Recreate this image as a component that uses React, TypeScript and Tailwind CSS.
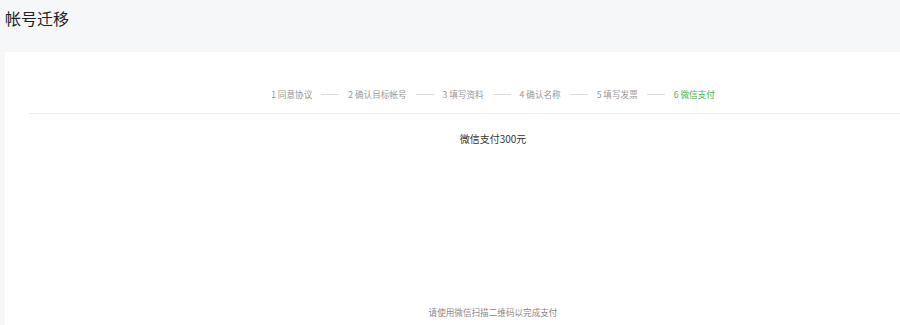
import React from 'react';

const steps = ['1 同意协议', '2 确认目标帐号', '3 填写资料', '4 确认名称', '5 填写发票', '6 微信支付'];

export default function App() {
  return (
    <div
      className="w-[900px] h-[325px] overflow-hidden bg-[#f6f7f9] text-[#333]"
      style={{ fontFamily: '"Noto Sans CJK SC", "Noto Sans", sans-serif' }}
    >
      <div className="h-[52px] pl-[5px] pt-[6px]">
        <h1 className="text-[16px] leading-[24px] font-normal text-[#222]">帐号迁移</h1>
      </div>
      <div className="ml-[5px] w-[976px] h-[300px] bg-white px-[24px] pt-[33px]">
        <div className="flex items-center justify-center h-[18px] text-[8.6px] leading-[18px] text-[#999]">
          {steps.map((s, i) => (
            <React.Fragment key={s}>
              {i > 0 && <span className="mx-[9px] w-[18px] h-px bg-[#ddd]" />}
              <span className={i === steps.length - 1 ? 'text-[#44b549]' : ''}>{s}</span>
            </React.Fragment>
          ))}
        </div>
        <div className="mt-[10px] border-t border-[#eee]" />
        <div className="flex flex-col items-center">
          <p className="mt-[18px] text-[10px] leading-[14px] text-[#353535]">微信支付300元</p>
          <div className="h-[160px]" />
          <p className="text-[8.6px] leading-[12px] text-[#888]">请使用微信扫描二维码以完成支付</p>
        </div>
      </div>
    </div>
  );
}
